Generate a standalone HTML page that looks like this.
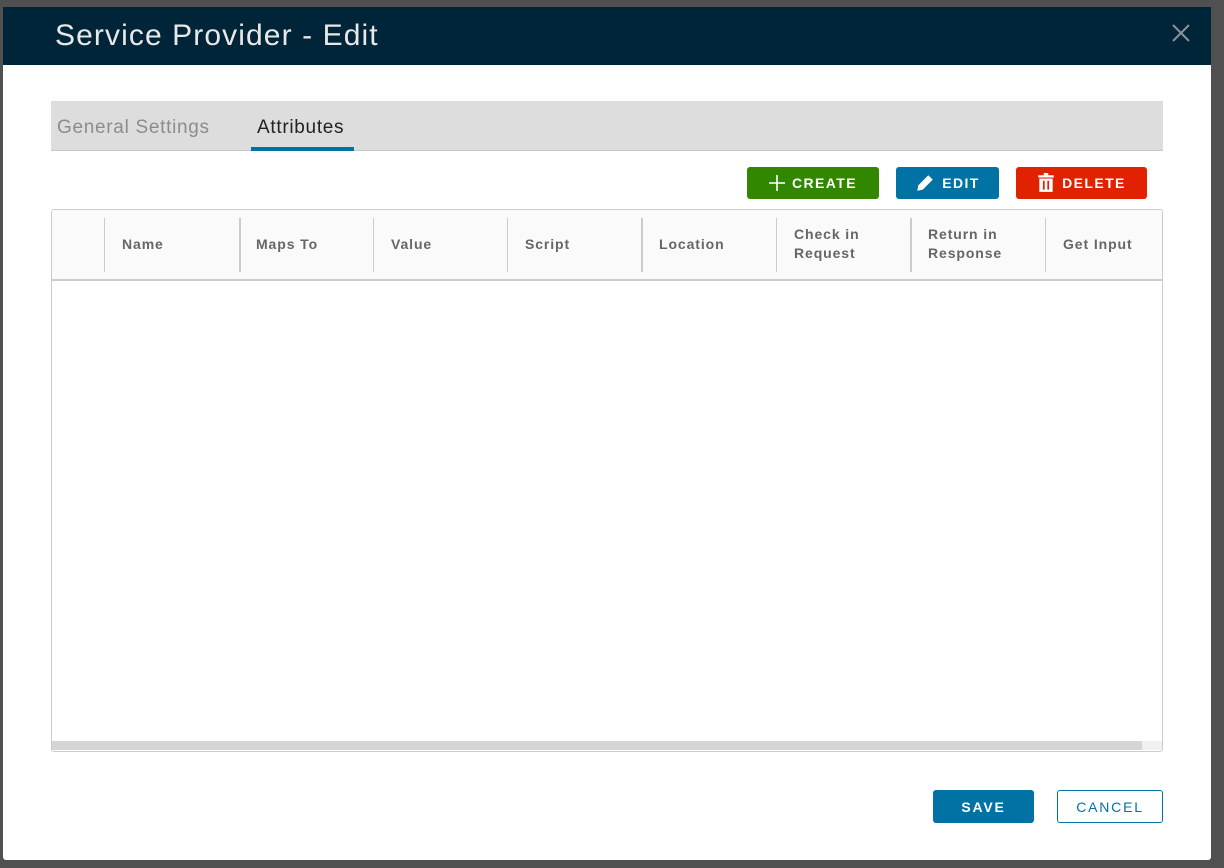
<!DOCTYPE html>
<html><head><meta charset="utf-8"><style>
*{margin:0;padding:0;box-sizing:border-box}
body{width:1224px;height:868px;background:#505050;font-family:"Liberation Sans",sans-serif;position:relative;overflow:hidden}
.modal{position:absolute;left:3px;top:7px;width:1208px;height:853px;background:#fff;border-radius:0 0 3px 3px}
.hdr{position:absolute;left:0;top:0;width:1208px;height:58px;background:#002538}
.title{position:absolute;left:52px;top:12px;font-size:30px;color:#e8e8e8;letter-spacing:1.1px}
.close{position:absolute;left:1168px;top:16px}
.tabs{position:absolute;left:48px;top:94px;width:1112px;height:50px;background:#ddd;border-bottom:1px solid #c8c8c8}
.tab{position:absolute;top:16px;font-size:19px;letter-spacing:0.7px}
.btn{position:absolute;height:32px;border-radius:3px;color:#fff;font-size:14px;font-weight:bold;letter-spacing:1.4px;display:flex;align-items:center;justify-content:center;gap:7px}
.grid{position:absolute;left:48px;top:202px;width:1112px;height:543px;border:1px solid #ccc;border-radius:3px;overflow:hidden}
.ghead{position:absolute;left:0;top:0;width:1110px;height:71px;background:#fafafa;border-bottom:2px solid #ccc}
.sep{position:absolute;top:8px;width:1px;height:54px;background:#ccc}
.col{position:absolute;font-size:14px;font-weight:bold;color:#666;letter-spacing:0.9px;line-height:19px}
.sb{position:absolute;left:0;top:531px;width:1110px;height:9px;background:#f0f0f0}
</style></head><body>
<div class="modal">
<div class="hdr"><div class="title">Service Provider - Edit</div>
<svg class="close" width="20" height="20" viewBox="0 0 20 20"><path d="M2 2L18 18M18 2L2 18" stroke="#8a9199" stroke-width="2"/></svg></div>
<div class="tabs">
<div class="tab" style="left:6px;color:#8c8c8c">General Settings</div>
<div class="tab" style="left:206px;color:#222">Attributes</div>
<div style="position:absolute;left:200px;top:46px;width:103px;height:4px;background:#0072a3"></div>
</div>
<div class="btn" style="left:744px;top:160px;width:132px;background:#318700"><svg width="16" height="16"><path d="M8 0V16M0 8H16" stroke="#fff" stroke-width="1.6"/></svg>CREATE</div>
<div class="btn" style="left:893px;top:160px;width:103px;background:#0072a3"><svg width="20" height="20" viewBox="0 0 18 18"><path d="M2 16L3 11L12 2L16 6L7 15Z" fill="#fff"/></svg>EDIT</div>
<div class="btn" style="left:1013px;top:160px;width:131px;background:#e12200"><svg width="18" height="20" viewBox="0 0 16 18"><path d="M1 3H15M6 1H10" stroke="#fff" stroke-width="2"/><path d="M2 5H14V17H2Z" fill="#fff"/><path d="M6 7V15M10 7V15" stroke="#e12200" stroke-width="1.6"/></svg>DELETE</div>
<div class="grid">
<div class="ghead">
<div class="sep" style="left:52px"></div><div class="sep" style="left:187px;width:2px"></div><div class="sep" style="left:321px"></div><div class="sep" style="left:455px"></div><div class="sep" style="left:589px;width:2px"></div><div class="sep" style="left:724px"></div><div class="sep" style="left:858px;width:2px"></div><div class="sep" style="left:993px"></div>
<div class="col" style="left:70px;top:25px">Name</div>
<div class="col" style="left:204px;top:25px">Maps To</div>
<div class="col" style="left:339px;top:25px">Value</div>
<div class="col" style="left:473px;top:25px">Script</div>
<div class="col" style="left:607px;top:25px">Location</div>
<div class="col" style="left:742px;top:15px">Check in<br>Request</div>
<div class="col" style="left:876px;top:15px">Return in<br>Response</div>
<div class="col" style="left:1011px;top:25px">Get Input</div>
</div>
<div class="sb"><div style="width:1090px;height:9px;background:#d5d5d5"></div></div>
</div>
<div class="btn" style="left:930px;top:783px;width:101px;height:33px;background:#0072a3;font-size:14px;letter-spacing:1.8px">SAVE</div>
<div class="btn" style="left:1054px;top:783px;width:106px;height:33px;border:1px solid #0072a3;color:#0072a3;font-weight:normal;font-size:14px;letter-spacing:1.8px">CANCEL</div>
</div>
</body></html>
